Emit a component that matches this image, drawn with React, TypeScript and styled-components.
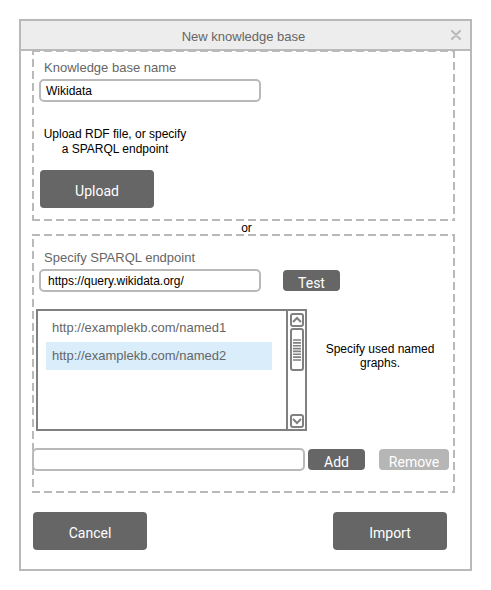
import React, { useState } from 'react';
import styled, { createGlobalStyle, css } from 'styled-components';

const line = '#b9b9b9';
const dark = '#666666';
const steel = '#808080';

const GlobalStyle = createGlobalStyle`
  *, *::before, *::after { box-sizing: border-box; }
  body {
    margin: 0;
    background: #fff;
    color: #000;
    font: 12px/15px "Liberation Sans", Arial, sans-serif;
  }
  button, input { font-family: inherit; margin: 0; }
`;

const Dialog = styled.section`
  margin: 19px;
  border: 2px solid ${line};
  background: #fff;
`;

const TitleBar = styled.header`
  display: grid;
  grid-template-columns: 24px 1fr 28px;
  align-items: center;
  height: 30px;
  padding-top: 2px;
  border-bottom: 2px solid ${line};
  background: #ededed;
`;

const Title = styled.h1`
  grid-column: 2;
  margin: 0;
  color: ${dark};
  font-size: 13px;
  font-weight: 400;
  text-align: center;
`;

const CloseButton = styled.button`
  display: flex;
  align-items: center;
  justify-content: center;
  height: 24px;
  padding: 0 0 2px;
  border: 0;
  background: none;
`;

const Content = styled.form`
  margin: -1px 15px 0 11px;
`;

const dashX = `linear-gradient(90deg, ${line} 8px, transparent 8px)`;
const dashY = `linear-gradient(180deg, ${line} 8px, transparent 8px)`;

const Panel = styled.div<{ $roomy?: boolean }>`
  padding: ${p => (p.$roomy ? 16 : 10)}px 6px 13px 7px;
  background:
    ${dashX} left top / 12px 2px repeat-x,
    ${dashX} left bottom / 12px 2px repeat-x,
    ${dashY} left ${p => (p.$roomy ? -7 : -3)}px / 2px 12px repeat-y,
    ${dashY} right top / 2px 12px repeat-y;
`;

const Separator = styled.p`
  margin: 0;
  padding: 1px 0 0 6px;
  line-height: 12px;
  text-align: center;
`;

const Label = styled.label`
  display: block;
  padding: 0 5px;
  color: ${dark};
  font-size: 13px;
  line-height: 16px;
`;

const TextInput = styled.input<{ $grow?: boolean; $inset?: number }>`
  flex: ${p => (p.$grow ? '1 1 0' : '0 1 222px')};
  min-width: 0;
  height: 23px;
  padding: 0 ${p => p.$inset ?? 5}px;
  border: 2px solid ${line};
  border-radius: 5px;
  background: #fff;
  color: #000;
  font-size: 12px;
  outline: none;
`;

const FieldRow = styled.div`
  display: flex;
  align-items: center;
  gap: 22px;
  margin-top: 3px;
`;

const Hint = styled.p`
  width: 152px;
  margin: 25px 0 13px;
  text-align: center;
`;

const Button = styled.button<{ $size?: 'large' | 'small' | 'wide' }>`
  flex: none;
  border: 0;
  border-radius: 4px;
  background: ${dark};
  color: #fff;
  font-family: Roboto, "Liberation Sans", sans-serif;
  font-size: 14px;
  ${p =>
    p.$size === 'large'
      ? css`width: 114px; height: 38px; padding: 4px 0 0;`
      : css`width: ${p.$size === 'wide' ? 70 : 57}px; height: 21px; padding: 5px 0 0; line-height: 16px;`}
  &:disabled { background: #b6b6b6; }
`;

const UploadRow = styled.div`
  padding-left: 1px;
`;

const GraphRow = styled.div`
  display: flex;
  align-items: stretch;
  margin: 17px -4px 0 -3px;
`;

const ListBox = styled.div`
  display: flex;
  flex: 0 1 271px;
  height: 122px;
  border: 2px solid ${steel};
`;

const Options = styled.ul`
  flex: 1;
  margin: 0;
  padding: 3px 14px 0 8px;
  list-style: none;
`;

const Option = styled.li<{ $selected: boolean }>`
  height: 28px;
  padding-left: 6px;
  background: ${p => (p.$selected ? '#d9edfb' : 'transparent')};
  color: ${dark};
  font-size: 13px;
  line-height: 28px;
  cursor: default;
`;

const ScrollTrack = styled.div`
  display: flex;
  flex-direction: column;
  align-items: center;
  width: 19px;
  padding: 2px 0 1px;
  border-left: 2px solid ${steel};
`;

const ScrollButton = styled.button`
  display: flex;
  align-items: center;
  justify-content: center;
  width: 14px;
  height: 14px;
  padding: 0;
  border: 2px solid ${steel};
  border-radius: 3px;
  background: #fff;
`;

const ScrollThumb = styled.div`
  display: flex;
  align-items: center;
  justify-content: center;
  width: 14px;
  height: 43px;
  margin: 1px 0 auto;
  border: 2px solid ${steel};
  border-radius: 3px;
`;

const GraphHint = styled.p`
  flex: 1;
  margin: 0;
  padding: 33px 12px 0;
  line-height: 14px;
  text-align: center;
`;

const AddRow = styled.div`
  display: flex;
  align-items: center;
  gap: 3px;
  margin: 17px 0 9px -7px;
`;

const RemoveButton = styled(Button)`
  margin-left: 11px;
`;

const Actions = styled.footer`
  display: flex;
  justify-content: space-between;
  padding: 19px 8px 19px 1px;
`;

const Chevron = ({ down }: { down?: boolean }) => (
  <svg width="10" height="8" viewBox="0 0 10 8" fill="none" stroke={steel} strokeWidth="2" aria-hidden="true">
    <path d={down ? 'M1 2l4 4 4-4' : 'M1 6l4-4 4 4'} />
  </svg>
);

const graphs = ['http://examplekb.com/named1', 'http://examplekb.com/named2'];

export default function App() {
  const [selected, setSelected] = useState(1);
  return (
    <>
      <GlobalStyle />
      <Dialog role="dialog" aria-labelledby="title">
        <TitleBar>
          <Title id="title">New knowledge base</Title>
          <CloseButton type="button" aria-label="Close">
            <svg width="10" height="10" viewBox="0 0 10 10" stroke={line} strokeWidth="2" strokeLinecap="round">
              <path d="M1 1l8 8M9 1l-8 8" />
            </svg>
          </CloseButton>
        </TitleBar>
        <Content onSubmit={e => e.preventDefault()}>
          <Panel>
            <Label htmlFor="name">Knowledge base name</Label>
            <FieldRow>
              <TextInput id="name" defaultValue="Wikidata" />
            </FieldRow>
            <Hint>Upload RDF file, or specify a SPARQL endpoint</Hint>
            <UploadRow>
              <Button type="button" $size="large">Upload</Button>
            </UploadRow>
          </Panel>
          <Separator>or</Separator>
          <Panel $roomy>
            <Label htmlFor="endpoint">Specify SPARQL endpoint</Label>
            <FieldRow>
              <TextInput id="endpoint" $inset={7} defaultValue="https://query.wikidata.org/" />
              <Button type="button">Test</Button>
            </FieldRow>
            <GraphRow>
              <ListBox>
                <Options role="listbox" aria-label="Named graphs">
                  {graphs.map((g, i) => (
                    <Option key={g} role="option" aria-selected={i === selected} $selected={i === selected} onClick={() => setSelected(i)}>
                      {g}
                    </Option>
                  ))}
                </Options>
                <ScrollTrack>
                  <ScrollButton type="button" aria-label="Scroll up"><Chevron /></ScrollButton>
                  <ScrollThumb>
                    <svg width="8" height="22" viewBox="0 0 8 22" stroke={steel} strokeWidth="1.6" aria-hidden="true">
                      <path d="M0 1h8M0 3.9h8M0 6.7h8M0 9.6h8M0 12.4h8M0 15.3h8M0 18.1h8M0 21h8" />
                    </svg>
                  </ScrollThumb>
                  <ScrollButton type="button" aria-label="Scroll down"><Chevron down /></ScrollButton>
                </ScrollTrack>
              </ListBox>
              <GraphHint>Specify used named graphs.</GraphHint>
            </GraphRow>
            <AddRow>
              <TextInput $grow aria-label="Named graph address" />
              <Button type="button">Add</Button>
              <RemoveButton type="button" $size="wide" disabled>Remove</RemoveButton>
            </AddRow>
          </Panel>
          <Actions>
            <Button type="button" $size="large">Cancel</Button>
            <Button type="submit" $size="large">Import</Button>
          </Actions>
        </Content>
      </Dialog>
    </>
  );
}
